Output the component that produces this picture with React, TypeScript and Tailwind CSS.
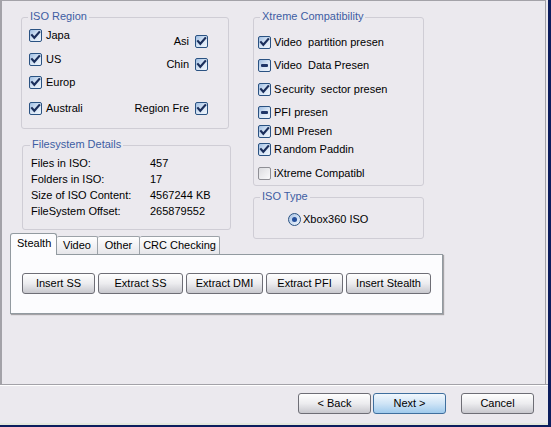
import React from "react"

type CheckState = "on" | "off" | "mixed"

function CheckBox({ state = "on" }: { state?: CheckState }) {
  if (state === "off") {
    return (
      <span className="block w-[13px] h-[13px] shrink-0 border border-[#8f8f95] rounded-[2px] bg-linear-to-br from-[#dcdce0] to-[#fbfbfc]" />
    )
  }
  return (
    <span className="relative block w-[13px] h-[13px] shrink-0 border border-[#2a5282] rounded-[2px] bg-linear-to-br from-[#9ebde2] via-[#d6e4f4] to-[#eef4fb]">
      {state === "on" ? (
        <svg width="11" height="11" viewBox="0 0 11 11" className="absolute left-0 top-0">
          <path d="M2 5.2 L4.3 7.8 L9.2 2.2" fill="none" stroke="#1b2f5c" strokeWidth="2.2" strokeLinecap="square" />
        </svg>
      ) : (
        <span className="absolute left-[2px] top-[4px] w-[7px] h-[3px] bg-[#1f3668] rounded-[1px]" />
      )}
    </span>
  )
}

function Radio() {
  return (
    <span className="relative block w-[13px] h-[13px] shrink-0 rounded-full border border-[#2a5282] bg-linear-to-br from-[#a9c4e6] to-[#f1f6fc]">
      <span className="absolute left-[3px] top-[3px] w-[5px] h-[5px] rounded-full bg-[#244f9c]" />
    </span>
  )
}

function Group({ title, className, titleLeft = "left-[6px]", children }: {
  title: string
  className: string
  titleLeft?: string
  children?: React.ReactNode
}) {
  return (
    <div className={"relative border border-[#cfcdd5] rounded-[3px] " + className}>
      <span className={"absolute top-[-8px] px-[2px] bg-[#ebe9ee] text-[#3d5da3] leading-[13px] " + titleLeft}>{title}</span>
      {children}
    </div>
  )
}

function Btn({ label, w, def }: { label: string; w: string; def?: boolean }) {
  const look = def
    ? "border-[#3f6f9e] bg-linear-to-b from-[#f2f8fd] via-[#cfe4f6] to-[#9fcaec]"
    : "border-[#6e6e76] bg-linear-to-b from-[#ffffff] via-[#ececef] to-[#c8c8ce]"
  return (
    <div className={"h-[21px] flex items-center justify-center rounded-[3px] border text-black " + look + " " + w}>
      {label}
    </div>
  )
}

const fsRows = [
  ["Files in ISO:", "457"],
  ["Folders in ISO:", "17"],
  ["Size of ISO Content:", "4567244 KB"],
  ["FileSystem Offset:", "265879552"],
]

export default function App() {
  return (
    <div className="w-[551px] h-[427px] bg-[#0c1d5e] overflow-hidden font-['Liberation_Sans',Arial,sans-serif] text-[11px] leading-[13px] text-black">
      <div className="w-[548px] h-[425px] bg-[#ebe9ee] flex flex-col">
        <div className="w-[546px] h-[384px] border-l-2 border-t border-r border-[#a3a2a8] flex flex-col shrink-0">
          <div className="flex items-start h-[232px]">
            {/* left column */}
            <div className="ml-[19px] mt-[16px] flex flex-col">
              <Group title="ISO Region" className="w-[208px] h-[112px]">
                <div className="flex justify-between pl-[7px] pr-[20px]">
                  <div className="flex flex-col">
                    <label className="mt-[11px] flex items-center gap-[4px]"><CheckBox />Japa</label>
                    <label className="mt-[11px] flex items-center gap-[4px]"><CheckBox />US</label>
                    <label className="mt-[10px] flex items-center gap-[4px]"><CheckBox />Europ</label>
                    <label className="mt-[13px] flex items-center gap-[4px]"><CheckBox />Australi</label>
                  </div>
                  <div className="flex flex-col items-end">
                    <label className="mt-[17px] flex items-center gap-[6px]">Asi<CheckBox /></label>
                    <label className="mt-[10px] flex items-center gap-[6px]">Chin<CheckBox /></label>
                    <label className="mt-[31px] flex items-center gap-[6px]">Region Fre<CheckBox /></label>
                  </div>
                </div>
              </Group>
              <Group title="Filesystem Details" className="ml-px mt-[16px] w-[209px] h-[85px]" titleLeft="left-[7px]">
                <div className="mt-[9px] pl-[8px] flex flex-col">
                  {fsRows.map(([k, v]) => (
                    <div key={k} className="flex h-[16px] items-center">
                      <span className="w-[119px]">{k}</span>
                      <span>{v}</span>
                    </div>
                  ))}
                </div>
              </Group>
            </div>

            {/* right column */}
            <div className="ml-[22px] mt-[16px] flex flex-col">
              <Group title="Xtreme Compatibility" className="w-[171px] h-[169px]">
                <div className="pl-[4px] flex flex-col whitespace-pre">
                  <label className="mt-[18px] flex items-center gap-[3px]"><CheckBox />Video  partition presen</label>
                  <label className="mt-[10px] flex items-center gap-[3px]"><CheckBox state="mixed" />Video  Data Presen</label>
                  <label className="mt-[11px] flex items-center gap-[3px]"><CheckBox />S{"\u200A"}ecurity  sector presen</label>
                  <label className="mt-[10px] flex items-center gap-[3px]"><CheckBox state="mixed" />PFI presen</label>
                  <label className="mt-[6px] flex items-center gap-[3px]"><CheckBox />DMI Presen</label>
                  <label className="mt-[5px] flex items-center gap-[3px]"><CheckBox />R{"\u200A"}andom Paddin</label>
                  <label className="mt-[11px] flex items-center gap-[3px]"><CheckBox state="off" />iXtreme Compatibl</label>
                </div>
              </Group>
              <Group title="ISO Type" className="mt-[11px] w-[171px] h-[42px]">
                <label className="mt-[15px] ml-[34px] flex items-center gap-[2px]"><Radio />Xbox360 ISO</label>
              </Group>
            </div>
          </div>

          {/* tabs */}
          <div className="ml-[8px] flex items-end h-[21px] relative z-10">
            <div className="w-[47px] h-[22px] -mb-px bg-[#fcfcfe] border border-b-0 border-[#929aa0] rounded-t-[3px] pl-[6px] pt-[3px]">Stealth</div>
            <div className="w-[41px] h-[18px] border border-b-0 border-l-0 border-[#9ca2a8] rounded-t-[2px] bg-linear-to-b from-white to-[#e6e6ea] flex items-center justify-center">Video</div>
            <div className="w-[42px] h-[18px] border border-b-0 border-l-0 border-[#9ca2a8] rounded-t-[2px] bg-linear-to-b from-white to-[#e6e6ea] flex items-center justify-center">Other</div>
            <div className="w-[80px] h-[18px] border border-b-0 border-l-0 border-[#9ca2a8] rounded-t-[2px] bg-linear-to-b from-white to-[#e6e6ea] flex items-center justify-center">CRC Checking</div>
          </div>
          <div className="ml-[8px] w-[433px] h-[60px] border border-[#929aa0] bg-[#fcfcfe] shadow-[1px_1px_1px_rgba(0,0,0,0.3)] pt-[18px] pl-[11px] flex gap-[3px] items-start">
            <Btn label="Insert SS" w="w-[73px]" />
            <Btn label="Extract SS" w="w-[85px]" />
            <Btn label="Extract DMI" w="w-[77px]" />
            <Btn label="Extract PFI" w="w-[77px]" />
            <Btn label="Insert Stealth" w="w-[85px]" />
          </div>
        </div>

        <div className="h-px bg-[#a3a2a8] shrink-0" />
        <div className="h-px bg-white shrink-0" />

        <div className="flex-1 flex justify-end items-start pt-[7px] pr-[14px] border-b-2 border-[#e2e7dc]">
          <Btn label="< Back" w="w-[73px]" />
          <div className="ml-[2px]"><Btn label="Next >" w="w-[73px]" def /></div>
          <div className="ml-[15px]"><Btn label="Cancel" w="w-[73px]" /></div>
        </div>
      </div>
    </div>
  )
}
